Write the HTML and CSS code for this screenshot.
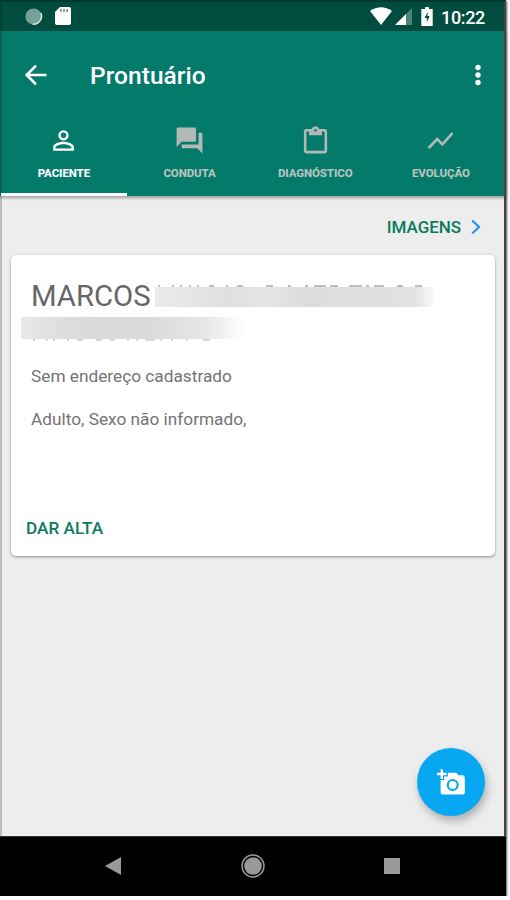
FILE: index.html
```html
<!DOCTYPE html>
<html lang="pt-BR">
<head>
<meta charset="utf-8">
<title>Prontuário</title>
<link rel="stylesheet" href="styles.css">
</head>
<body>
<div class="phone">
  <header class="status">
    <svg class="sync" viewBox="0 0 20 20"><circle cx="10" cy="10" r="8.500" fill="#75a198"/><path d="M17.500 6A8.300 8.300 0 0 1 9 18" fill="none" stroke="#d5e5e1" stroke-width="1.500"/></svg>
    <svg class="sd" viewBox="0 0 16 20"><path d="M5 1h9a2 2 0 0 1 2 2v14a2 2 0 0 1-2 2H2a2 2 0 0 1-2-2V6z" fill="#fff"/><path d="M6 3v3M9 3v3M12 3v3" stroke="#527d72" stroke-width="1.300"/></svg>
    <svg class="wifi" viewBox="0 0 22 18"><path d="M0 4Q11-3.500 22 4L11 18z" fill="#fff"/></svg>
    <svg class="signal" viewBox="0 0 17 17"><path d="M17 0v17H0z" fill="#4d8176"/><path d="M11 6v11H0z" fill="#fff"/></svg>
    <svg class="battery" viewBox="0 0 12 20"><path d="M4 0h4v2h4v18H0V2h4z" fill="#fff"/><path d="M6.800 5L3.500 11.500h2.300V16l3-6.500H6.500z" fill="#004d40"/></svg>
    <span class="time">10:22</span>
  </header>
  <div class="appbar">
    <div class="toolbar">
      <svg class="back" viewBox="0 0 24 24"><path d="M21 12H4M12 4L4 12l8 8" fill="none" stroke="#fff" stroke-width="2.300"/></svg>
      <h1>Prontuário</h1>
      <svg class="more" viewBox="0 0 8 22"><g fill="#fff"><circle cx="4" cy="3.500" r="2.700"/><circle cx="4" cy="11" r="2.700"/><circle cx="4" cy="18.500" r="2.700"/></g></svg>
    </div>
    <nav class="tabs">
      <div class="tab active"><svg viewBox="0 0 24 24"><path d="M12 5.900a2.100 2.100 0 1 1 0 4.200 2.100 2.100 0 0 1 0-4.200m0 9c2.970 0 6.100 1.460 6.100 2.100v1.100H5.900V17c0-.64 3.130-2.100 6.100-2.100M12 4a4 4 0 1 0 0 8 4 4 0 0 0 0-8zm0 9c-2.670 0-8 1.340-8 4v3h16v-3c0-2.660-5.330-4-8-4z"/></svg><span class="t1">PACIENTE</span></div>
      <div class="tab"><svg viewBox="0 0 24 24"><path d="M21 6h-2v9H6v2c0 .55.45 1 1 1h11l4 4V7c0-.55-.45-1-1-1zm-4 6V3c0-.55-.45-1-1-1H3c-.55 0-1 .45-1 1v14l4-4h10c.55 0 1-.45 1-1z"/></svg><span class="t2">CONDUTA</span></div>
      <div class="tab"><svg viewBox="0 0 24 24"><path d="M19 3h-4.180C14.400 1.840 13.300 1 12 1s-2.400.84-2.820 2H5c-1.100 0-2 .9-2 2v15c0 1.100.9 2 2 2h14c1.100 0 2-.9 2-2V5c0-1.100-.9-2-2-2zm-7 0c.55 0 1 .45 1 1s-.45 1-1 1-1-.45-1-1 .45-1 1-1zm7 17H5V5h2v3h10V5h2z"/></svg><span class="t3">DIAGNÓSTICO</span></div>
      <div class="tab"><svg viewBox="0 0 24 24"><path d="M3.500 18.490l6-6.010 4 4L22 6.920l-1.410-1.410-7.090 7.970-4-4L2 16.990z"/></svg><span class="t4">EVOLUÇÃO</span></div>
    </nav>
  </div>
  <main>
    <div class="link"><span>IMAGENS</span><svg viewBox="0 0 10 16"><path d="M1.200 1.500L8 8l-6.800 6.500" fill="none" stroke="#2793f0" stroke-width="2.200"/></svg></div>
    <section class="card">
      <div class="name"><span>MARCOS</span><svg class="mask-a" viewBox="0 0 278 22"><path d="M3 1h2M17 1h2M25 1h2M34 1h2M42 1h2M54 1h5M71 1h2M82 1h6M111 1h7M133 1h3M150 1h3M159 1h12M175 1h8M194 1h13M211 1h3M219 1h10M242 1h6M260 1h7" stroke="#aaa" stroke-width="1.500"/><defs><linearGradient id="a"><stop stop-color="#ececec"/><stop offset=".25" stop-color="#dfdfdf"/><stop offset=".4" stop-color="#e5e5e5"/><stop offset=".55" stop-color="#dcdcdc"/><stop offset=".93" stop-color="#e2e2e2"/><stop offset="1" stop-color="#f7f7f7"/></linearGradient></defs><path d="M0 2h278v20H0z" fill="url(#a)"/></svg></div>
      <svg class="mask-b" viewBox="0 0 224 24"><defs><linearGradient id="b"><stop stop-color="#e9e9e9"/><stop offset=".2" stop-color="#dcdcdc"/><stop offset=".55" stop-color="#d9d9d9"/><stop offset=".82" stop-color="#e6e6e6"/><stop offset="1" stop-color="#fff"/></linearGradient></defs><path d="M0 0h224v22H0z" fill="url(#b)"/><path d="M12 23h2M25 23h2M32 23h2M46 23h2M56 23h6M75 23h6M89 23h5M106 23h2M115 23h2M124 23h10M139 23h2M150 23h2M165 23h2M182 23h7" stroke="#ccc" stroke-width="1.300"/></svg>
      <p class="address">Sem endereço cadastrado</p>
      <p class="info">Adulto, Sexo não informado,</p>
      <div class="action">DAR ALTA</div>
    </section>
    <div class="fab"><svg viewBox="0 0 24 24"><path fill="#fff" d="M3 4V1h2v3h3v2H5v3H3V6H0V4zm3 6V7h3V4h7l1.830 2H21c1.100 0 2 .9 2 2v12c0 1.100-.9 2-2 2H5c-1.100 0-2-.9-2-2V10zm7 9a5 5 0 1 0 0-10 5 5 0 0 0 0 10zm-3.200-5a3.200 3.200 0 1 0 6.400 0 3.200 3.200 0 0 0-6.400 0z"/></svg></div>
  </main>
  <footer>
    <svg class="nav-back" viewBox="0 0 16 18"><path d="M16 0v18L0 9z" fill="#999"/></svg>
    <svg class="nav-home" viewBox="0 0 24 24"><circle cx="12" cy="12" r="11" fill="none" stroke="#999" stroke-width="1.500"/><circle cx="12" cy="12" r="8.800" fill="#999"/></svg>
    <div class="nav-recent"></div>
  </footer>
</div>
</body>
</html>
```
FILE: styles.css
```css
* { box-sizing: border-box; }
body { margin: 0; background: #fff; font-family: Roboto, "Liberation Sans", sans-serif; }
svg { display: block; flex: none; }
span, h1, p, .action { white-space: nowrap; }
.phone { width: 506px; height: 896px; display: flex; flex-direction: column; box-shadow: 1px 1px 2px #555; }
.status, .appbar, main { border-left: 2px solid #0003; border-right: 2px solid #444; }
.status { height: 31px; background: #004d40; border-top: 2px solid #00382f; display: flex; align-items: center; padding: 0 0 1px 22px; }
.sync { width: 19px; height: 19px; }
.sd { width: 16px; height: 20px; margin-left: 12px; }
.wifi { width: 22px; height: 18px; margin-left: 299px; }
.signal { width: 17px; height: 17px; margin-left: 3px; }
.battery { width: 12px; height: 19px; margin-left: 9px; }
.time { color: #fff; font-size: 18px; font-weight: 500; margin: 2px 0 0 8px; letter-spacing: -.35px; }
.appbar { height: 165px; flex: none; background: #047a6b; box-shadow: 0 2px 3px #0005; position: relative; }
.toolbar { height: 88px; display: flex; align-items: center; padding-left: 20px; }
.back { width: 28px; height: 28px; }
h1 { margin: 2px 0 0 40px; width: 120px; color: #fff; font-size: 24.5px; line-height: 30px; font-weight: 500; letter-spacing: .05px; }
.more { width: 8px; height: 22px; margin-left: 264px; }
.tabs { display: grid; grid-template-columns: repeat(4, 125.700px); height: 77px; margin-left: -1px; }
.tab { display: flex; flex-direction: column; align-items: center; padding-top: 6px; color: #b9c2be; fill: #b3b9b6; }
.tab svg { width: 31px; height: 31px; }
.tab span { font-size: 11.500px; line-height: 16px; font-weight: 800; margin-top: 9px; }
.tab.active { color: #fff; fill: #fff; border-bottom: 3px solid #fff; }
.tab .t1, .tab .t2 { letter-spacing: -.1px; }
.tab .t3, .tab .t4 { letter-spacing: -.1px; }
main { height: 640px; flex: none; background: #ededed; padding: 18px 9px 0; display: flex; flex-direction: column; }
.link { height: 25px; display: flex; align-items: center; justify-content: flex-end; color: #0b7a5c; font-size: 17px; font-weight: 500; letter-spacing: -.05px; gap: 10px; padding-right: 14px; }
.link svg { width: 10px; height: 16px; }
.card { height: 301px; margin-top: 16px; background: #fff; border-radius: 5px; box-shadow: 0 1px 3px #0006; padding: 26px 10px 0; color: #747474; }
.name { display: flex; height: 30px; align-items: center; padding-left: 10px; color: #666; font-size: 29.300px; font-weight: 400; }
.name span { width: 124px; }
.mask-a { width: 278px; height: 22px; }
.mask-b { width: 224px; height: 24px; margin-top: 6px; }
p { margin: 0; padding-left: 10px; font-size: 17.250px; line-height: 24px; }
.address { margin-top: 23px; }
.info { margin-top: 19px; }
.action { margin: 85px 0 0 5px; color: #0b7a5c; font-size: 17.200px; line-height: 24px; font-weight: 500; }
.fab { width: 68px; height: 68px; border-radius: 50%; background: #08a7f2; box-shadow: 2px 5px 8px #0004; margin: 192px 10px 0 auto; display: flex; align-items: center; justify-content: center; }
.fab svg { width: 29px; height: 29px; }
footer { flex: 1; background: #000; border-top: 1px solid #333; display: flex; align-items: center; padding: 0 0 2px 105px; }
.nav-back { width: 16px; height: 18px; }
.nav-home { width: 24px; height: 24px; margin-left: 120px; }
.nav-recent { width: 16px; height: 16px; margin-left: 119px; background: #9a9a9a; }
```
